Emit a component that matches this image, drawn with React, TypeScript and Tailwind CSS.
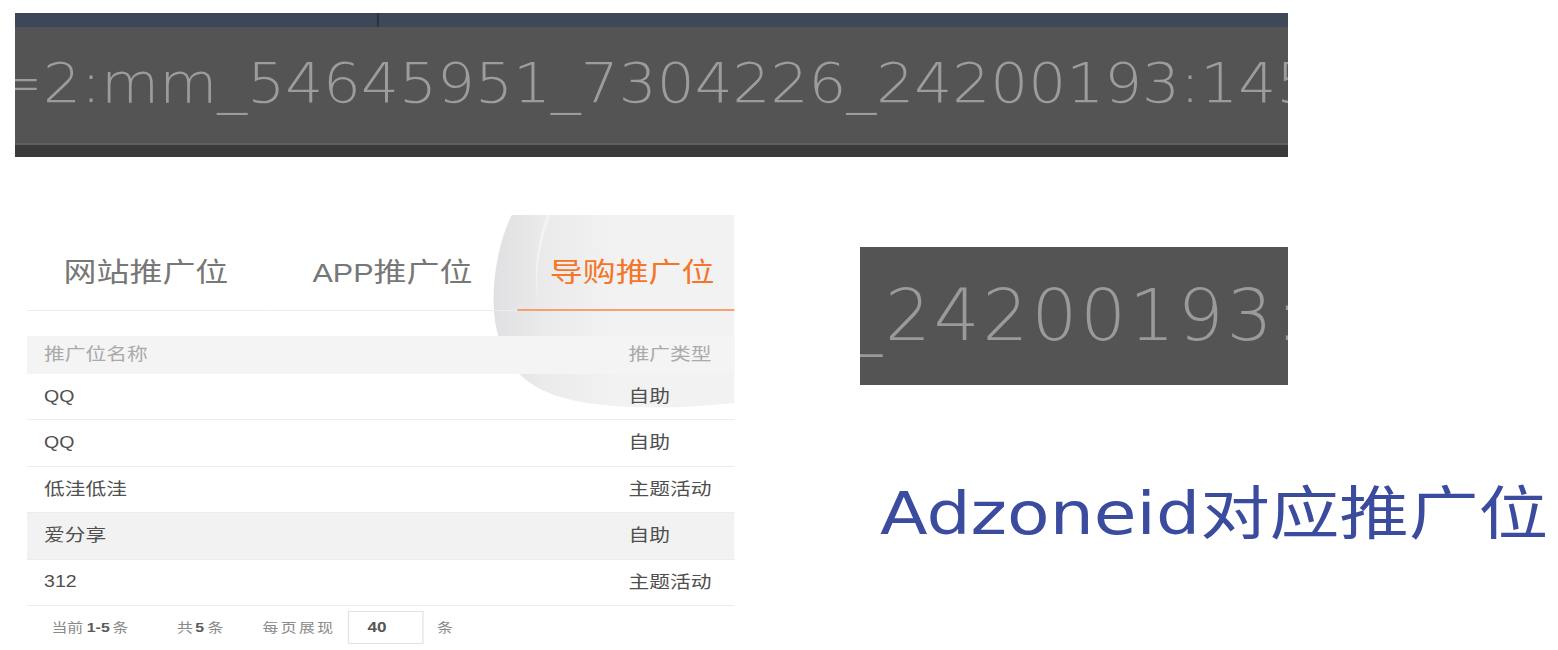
const rows: { name: string; type: string; hover?: boolean }[] = [
  { name: "QQ", type: "自助" },
  { name: "QQ", type: "自助" },
  { name: "低洼低洼", type: "主题活动" },
  { name: "爱分享", type: "自助", hover: true },
  { name: "312", type: "主题活动" },
];

const isLatin = (s: string) => /^[A-Za-z0-9]+$/.test(s);

function TopBar() {
  return (
    <div className="ml-[15px] mt-[13px] w-[1273px] h-[144px] flex flex-col overflow-hidden">
      {/* title strip */}
      <div className="h-[14px] flex">
        <div className="w-[362px] bg-[#3c4658]"></div>
        <div className="w-[2px] bg-[#2c323c]"></div>
        <div className="flex-1 bg-[#3f4859]"></div>
      </div>
      {/* value field */}
      <div className="h-[116px] bg-[#545454] pt-[29px] overflow-hidden whitespace-nowrap">
        <div className="ml-[-22px] origin-left scale-x-[1.085] text-[55px] leading-none font-extralight text-[#9c9c9c] font-['DejaVu_Sans',sans-serif]">
          =2:mm_54645951_7304226_24200193:145
        </div>
      </div>
      <div className="h-[2px] bg-[#5f5f5f]"></div>
      <div className="flex-1 bg-[#3a3a3a]"></div>
    </div>
  );
}

function Curl() {
  return (
    <svg
      className="absolute left-0 top-0"
      width="580"
      height="200"
      viewBox="0 0 708 200"
      preserveAspectRatio="none"
    >
      <defs>
        <linearGradient id="curl" x1="462" y1="0" x2="590" y2="0" gradientUnits="userSpaceOnUse">
          <stop offset="0" stopColor="#dfdfe1" />
          <stop offset="0.45" stopColor="#ebebec" />
          <stop offset="1" stopColor="#f2f2f2" />
        </linearGradient>
      </defs>
      <path
        d="M485 0 C470 30 462 80 470 115 C480 160 510 180 560 188 C610 195 660 193 708 188 L708 0 Z"
        fill="url(#curl)"
      />
      <path d="M524 0 C512 30 508 60 512 90 C506 60 510 28 520 0 Z" fill="#f6f6f6" opacity="0.7" />
    </svg>
  );
}

/* the source screenshot is stretched sideways, so the table is laid out
   at its natural width and widened with scale-x */
function PromoTable() {
  return (
    <div className="relative ml-[27px] w-[580px] h-[435px] shrink-0 origin-left scale-x-[1.22] overflow-hidden font-['Liberation_Sans','Noto_Sans_CJK_SC',sans-serif]">
      <Curl />
      <div className="relative">
        {/* TABS */}
        <div className="flex h-[96px] text-[27px]">
          <div className="w-[197px] pt-[22px] border-b border-[#ededed] flex items-center justify-center text-[#777]">
            <span className="ml-[-2px]">网站推广位</span>
          </div>
          <div className="w-[205px] pt-[22px] border-b border-[#ededed] flex items-center justify-center text-[#777]">
            <span className="text-[25px]">APP</span>
            <span>推广位</span>
          </div>
          <div className="flex-1 pt-[22px] border-b-2 border-[#f7a06f] flex items-center justify-center text-[#f4762a]">
            <span className="ml-[10px]">导购推广位</span>
          </div>
        </div>

        {/* HEADER */}
        <div className="mt-[25px] h-[38px] bg-[#f4f4f4] flex items-center text-[17px] text-[#aaa]">
          <div className="w-[493px] pl-[14px]">推广位名称</div>
          <div className="flex-1">推广类型</div>
        </div>

        {/* ROWS */}
        {rows.map((r, i) => (
          <div
            key={i}
            className={
              r.hover
                ? "h-[46.4px] bg-[#f2f2f2] border-b border-[#ececec] flex items-center text-[#4f4f4f]"
                : "h-[46.4px] border-b border-[#ececec] flex items-center text-[#4f4f4f]"
            }
          >
            <div className={isLatin(r.name) ? "w-[493px] pl-[14px] text-[16px]" : "w-[493px] pl-[14px] text-[17px]"}>
              {r.name}
            </div>
            <div className="flex-1 text-[17px]">{r.type}</div>
          </div>
        ))}

        {/* PAGER */}
        <div className="h-[44px] flex items-center whitespace-nowrap text-[13px] text-[#8a8a8a]">
          <span className="ml-[20px] w-[29px] shrink-0">当前</span>
          <span className="w-[21px] shrink-0 font-bold text-[#5a5a5a]">1-5</span>
          <span className="w-[53px] shrink-0">条</span>
          <span className="w-[15px] shrink-0">共</span>
          <span className="w-[10px] shrink-0 font-bold text-[#5a5a5a]">5</span>
          <span className="w-[45px] shrink-0">条</span>
          <span className="w-[70px] shrink-0 tracking-[2px]">每页展现</span>
          <div className="w-[62px] h-[33px] shrink-0 border border-[#e2e2e2] flex items-center pl-[15px] text-[14px] text-[#555] font-bold">
            40
          </div>
          <span className="ml-[11px]">条</span>
        </div>
      </div>
    </div>
  );
}

function SidePanel() {
  return (
    <div className="ml-[253px] flex flex-col">
      <div className="mt-[32px] w-[428px] h-[138px] bg-[#545454] pt-[32px] overflow-hidden whitespace-nowrap">
        <div className="ml-[-14px] text-[72px] leading-none tracking-[3px] font-extralight text-[#9a9a9a] font-['DejaVu_Sans',sans-serif]">
          _24200193:
        </div>
      </div>
      <div className="mt-[100px] ml-[20px] whitespace-nowrap origin-left scale-x-[1.2] text-[58px] leading-none text-[#3b4c9e] font-['DejaVu_Sans','Noto_Sans_CJK_SC',sans-serif]">
        Adzoneid对应推广位
      </div>
    </div>
  );
}

export default function App() {
  return (
    <div className="w-[1558px] h-[650px] bg-white overflow-hidden">
      <TopBar />
      <div className="mt-[58px] flex">
        <PromoTable />
        <SidePanel />
      </div>
    </div>
  );
}
